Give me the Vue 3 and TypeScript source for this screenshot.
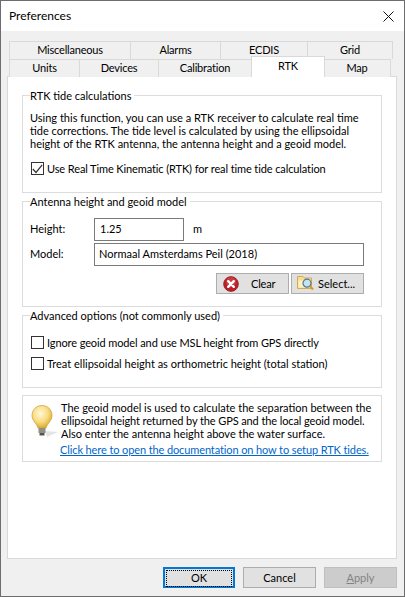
<template>
  <div class="window">
    <header class="titlebar">
      <span>Preferences</span>
      <svg class="close" width="11" height="11" viewBox="0 0 11 11" aria-hidden="true">
        <path d="M0.5 0.5 10.5 10.5M10.5 0.5 0.5 10.5" stroke="#111" stroke-width="1" fill="none" />
      </svg>
    </header>

    <main class="body">
      <div class="tabs">
        <div class="tab-row back">
          <span v-for="tab in backTabs" :key="tab.name" class="tab" :style="{ width: tab.width + 'px' }">{{ tab.name }}</span>
        </div>
        <div class="tab-row front">
          <span
            v-for="tab in frontTabs"
            :key="tab.name"
            class="tab"
            :class="{ active: tab.active }"
            :style="{ width: tab.width + 'px' }"
          >{{ tab.name }}</span>
        </div>
      </div>

      <section class="panel">
        <fieldset class="group tide">
          <legend>RTK tide calculations</legend>
          <p>Using this function, you can use a RTK receiver to calculate real time</p>
          <p>tide corrections. The tide level is calculated by using the ellipsoidal</p>
          <p>height of the RTK antenna, the antenna height and a geoid model.</p>
          <label class="check first tight">
            <span class="box">
              <svg width="11" height="10" viewBox="0 0 11 10" aria-hidden="true">
                <path d="M0.8 5 4 8.5 10.2 0.8" stroke="#333" stroke-width="1.2" fill="none" />
              </svg>
            </span>
            Use Real Time Kinematic (RTK) for real time tide calculation
          </label>
        </fieldset>

        <fieldset class="group antenna">
          <legend>Antenna height and geoid model</legend>
          <div class="field">
            <span class="field-label">Height:</span>
            <span class="input short">1.25</span>
            <span class="unit">m</span>
          </div>
          <div class="field">
            <span class="field-label">Model:</span>
            <span class="input wide">Normaal Amsterdams Peil (2018)</span>
          </div>
          <div class="actions">
            <button type="button" class="btn icon-btn clear">
              <svg width="16" height="16" viewBox="0 0 16 16" aria-hidden="true">
                <circle cx="8" cy="8" r="7.4" fill="#bd1f29" stroke="#8e1a20" stroke-width="0.7" />
                <circle cx="8" cy="6" r="5" fill="#d9515a" opacity="0.55" />
                <path d="M5.2 5.2 10.8 10.8M10.8 5.2 5.2 10.8" stroke="#fff" stroke-width="2.4" stroke-linecap="round" fill="none" />
              </svg>
              <span>Clear</span>
            </button>
            <button type="button" class="btn icon-btn select">
              <svg width="18" height="17" viewBox="0 0 18 17" aria-hidden="true">
                <path d="M0.5 1.5H6L7.5 3H14.5V13.5H0.5Z" fill="#f6dd96" stroke="#d9a94e" />
                <path d="M1.5 5.5H13.5V12.5H1.5Z" fill="#fdf0c4" />
                <circle cx="10" cy="8.2" r="4" fill="#c4e3f2" stroke="#56788f" stroke-width="1.2" />
                <path d="M13 11.2 16 14.5" stroke="#d99a2b" stroke-width="2.2" />
              </svg>
              <span>Select...</span>
            </button>
          </div>
        </fieldset>

        <fieldset class="group advanced">
          <legend>Advanced options (not commonly used)</legend>
          <label class="check tight">
            <span class="box"></span>
            Ignore geoid model and use MSL height from GPS directly
          </label>
          <label class="check second">
            <span class="box"></span>
            Treat ellipsoidal height as orthometric height (total station)
          </label>
        </fieldset>

        <div class="info">
          <svg class="bulb" width="30" height="36" viewBox="0 0 30 36" aria-hidden="true">
            <defs>
              <radialGradient id="glass" cx="0.42" cy="0.35" r="0.7">
                <stop offset="0" stop-color="#fff8d8" />
                <stop offset="0.55" stop-color="#f8dc80" />
                <stop offset="1" stop-color="#d7a12d" />
              </radialGradient>
            </defs>
            <path d="M14 26 27 27 16 32Z" fill="#d8d8d8" opacity="0.7" />
            <path d="M11 0.5C5 0.5 1 5 1 10.5 1 16 5.5 18 7 23H15C16.5 18 21 16 21 10.5 21 5 17 0.5 11 0.5Z" fill="url(#glass)" stroke="#cf9c33" stroke-width="0.7" />
            <rect x="7.5" y="23" width="7" height="5" fill="#8f8f86" />
            <rect x="8.5" y="28" width="5" height="2.5" fill="#55554f" />
          </svg>
          <div class="info-text">
            <p>The geoid model is used to calculate the separation between the</p>
            <p class="tight">ellipsoidal height returned by the GPS and the local geoid model.</p>
            <p>Also enter the antenna height above the water surface.</p>
            <a href="#" class="tight">Click here to open the documentation on how to setup RTK tides.</a>
          </div>
        </div>
      </section>

      <footer class="footer">
        <button type="button" class="btn default"><span class="focus">OK</span></button>
        <button type="button" class="btn">Cancel</button>
        <button type="button" class="btn disabled"><span><u>A</u>pply</span></button>
      </footer>
    </main>
  </div>
</template>

<script setup lang="ts">
interface Tab {
  name: string
  width: number
  active?: boolean
}

const backTabs: Tab[] = [
  { name: 'Miscellaneous', width: 122 },
  { name: 'Alarms', width: 90 },
  { name: 'ECDIS', width: 87 },
  { name: 'Grid', width: 85 }
]

const frontTabs: Tab[] = [
  { name: 'Units', width: 71 },
  { name: 'Devices', width: 79 },
  { name: 'Calibration', width: 93 },
  { name: 'RTK', width: 74, active: true },
  { name: 'Map', width: 67 }
]
</script>

<style>
html,
body {
  margin: 0;
  background: #f0f0f0;
}
</style>

<style scoped>
.window {
  box-sizing: border-box;
  width: 405px;
  height: 597px;
  display: flex;
  flex-direction: column;
  overflow: hidden;
  border: 1px solid #6d6d6d;
  color: #000;
  font-family: Lato, "Liberation Sans", sans-serif;
  font-size: 11px;
  line-height: 16px;
}

.titlebar {
  flex: none;
  display: flex;
  align-items: center;
  justify-content: space-between;
  height: 30px;
  padding: 0 10px 0 8px;
  background: #fff;
  font-size: 12px;
}

.body {
  flex: 1;
  display: flex;
  flex-direction: column;
  padding: 10px 7px 0 6px;
  background: #f0f0f0;
}

.tabs {
  display: flex;
  flex-direction: column;
  padding: 0 2px 0 2px;
  height: 35px;
  position: relative;
  z-index: 1;
}

.tab-row {
  display: flex;
}

.tab-row.back,
.tab-row.front {
  height: 18px;
}

.tab {
  box-sizing: border-box;
  display: flex;
  align-items: center;
  justify-content: center;
  height: 18px;
  padding-bottom: 1px;
  background: #f0f0f0;
  border: 1px solid #d9d9d9;
  border-left-width: 0;
  border-bottom-width: 0;
  letter-spacing: -0.2px;
  white-space: nowrap;
}

.tab:first-child {
  border-left-width: 1px;
}

.tab.active {
  height: 21px;
  margin: -3px -1px 0;
  padding-bottom: 3px;
  background: #fff;
  border-left-width: 1px;
  position: relative;
}

.panel {
  box-sizing: border-box;
  height: 483px;
  padding: 10px 14px 0;
  background: #fff;
  border: 1px solid #d9d9d9;
}

.group {
  box-sizing: border-box;
  margin: 0;
  padding: 0 0 0 7px;
  border: 1px solid #dcdcdc;
  min-width: 0;
}

.group legend {
  padding: 1px 3px 0 0;
  line-height: 15px;
  white-space: nowrap;
}

.tide {
  height: 106px;
  padding-top: 8px;
}

.antenna {
  height: 114px;
  padding-top: 8px;
}

.advanced {
  height: 81px;
  padding-top: 13px;
}

p {
  margin: 0;
  line-height: 13px;
  white-space: nowrap;
}

.tight {
  letter-spacing: -0.11px;
}

.check {
  display: flex;
  align-items: center;
  gap: 3px;
  height: 13px;
  margin-left: 1px;
  white-space: nowrap;
}

.check.first {
  margin-top: 12px;
}

.check.second {
  margin-top: 8px;
}

.box {
  box-sizing: border-box;
  flex: none;
  display: grid;
  place-items: center;
  width: 13px;
  height: 13px;
  background: #fff;
  border: 1px solid #333;
}

.field {
  display: flex;
  align-items: center;
  height: 24px;
  margin-bottom: 1px;
}

.field-label {
  width: 64px;
}

.input {
  box-sizing: border-box;
  height: 23px;
  line-height: 19px;
  padding-left: 4px;
  border: 1px solid #7a7a7a;
  background: #fff;
  white-space: nowrap;
}

.short {
  width: 90px;
  padding-left: 5px;
}

.wide {
  width: 270px;
}

.unit {
  margin-left: 9px;
}

.actions {
  display: flex;
  justify-content: flex-end;
  gap: 2px;
  margin: 7px 17px 0 0;
}

.btn {
  box-sizing: border-box;
  width: 73px;
  height: 21px;
  padding: 0;
  background: #e1e1e1;
  border: 1px solid #adadad;
  color: #000;
  font: inherit;
  line-height: 17px;
}

.icon-btn {
  display: flex;
  align-items: center;
  padding-left: 6px;
  gap: 12px;
}

.clear span {
  letter-spacing: -0.2px;
}

.select {
  padding-left: 5px;
  gap: 3px;
}

.info {
  box-sizing: border-box;
  display: flex;
  height: 67px;
  margin-top: 7px;
  padding: 5px 0 0 8px;
  border: 1px solid #dcdcdc;
}

.bulb {
  flex: none;
  margin-top: 4px;
}

.info-text a {
  display: block;
  margin-top: 2px;
  margin-left: -1px;
  color: #0066cc;
  line-height: 15px;
  white-space: nowrap;
}

.footer {
  display: flex;
  justify-content: flex-end;
  gap: 8px;
  padding-top: 8px;
}

.default {
  width: 72px;
  padding: 1px;
  border: 2px solid #0078d7;
}

.focus {
  display: block;
  height: 15px;
  line-height: 14px;
  border: 1px dotted #000;
}

.disabled {
  background: #cccccc;
  border-color: #bfbfbf;
  color: #838383;
}
</style>
